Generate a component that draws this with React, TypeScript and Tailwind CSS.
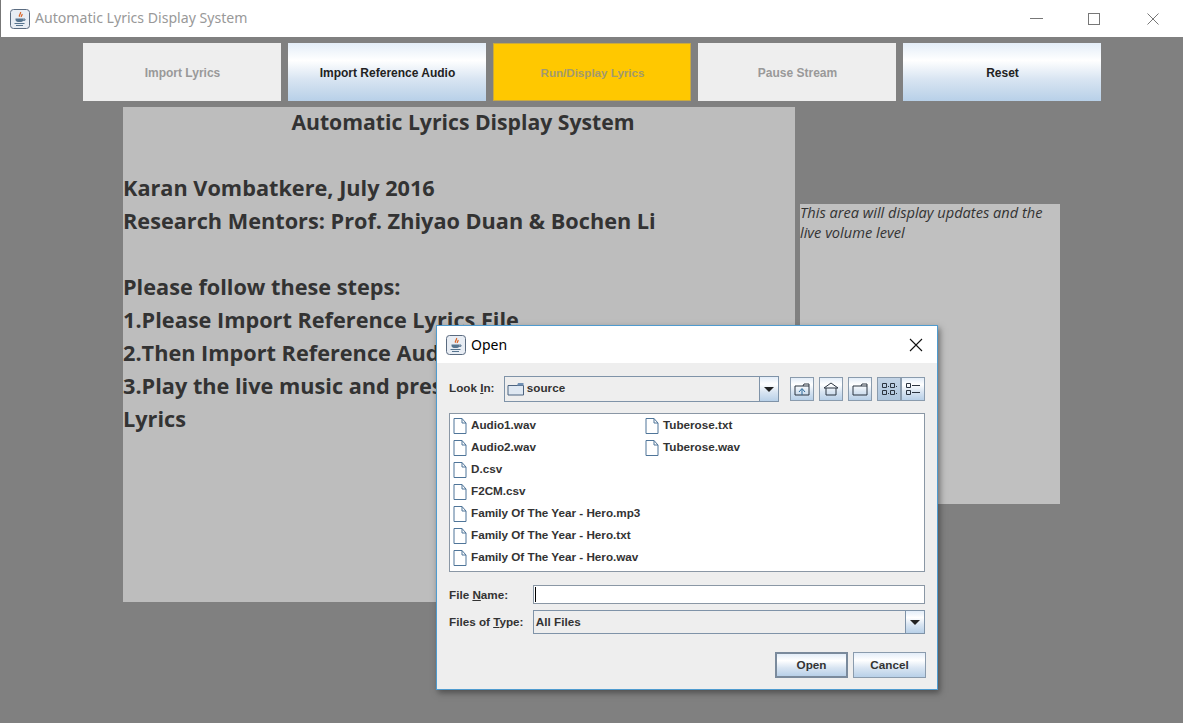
import type { ReactNode } from "react";

const TOP_BUTTONS = [
  { label: "Import Lyrics", kind: "off" },
  { label: "Import Reference Audio", kind: "on" },
  { label: "Run/Display Lyrics", kind: "run" },
  { label: "Pause Stream", kind: "off" },
  { label: "Reset", kind: "on" },
];

const METAL = "bg-[linear-gradient(180deg,#e3edf8_0%,#ffffff_30%,#d9e5f2_62%,#b8d0e8_100%)]";

const COL_ONE = [
  "Audio1.wav",
  "Audio2.wav",
  "D.csv",
  "F2CM.csv",
  "Family Of The Year - Hero.mp3",
  "Family Of The Year - Hero.txt",
  "Family Of The Year - Hero.wav",
];
const COL_TWO = ["Tuberose.txt", "Tuberose.wav"];

function JavaIcon() {
  return (
    <svg width="20" height="20" viewBox="0 0 20 20" className="shrink-0">
      <rect x="0.5" y="0.5" width="19" height="19" rx="3" fill="#e8edf4" stroke="#5a6b80" />
      <path d="M10.5 3c1 1.600-2 2.600-1 4.800M12 5c.6 1-1.200 1.600-.6 3" fill="none" stroke="#d9662a" strokeWidth="1.300" />
      <path d="M5.500 9.500h8v1.200c0 1.400-1.500 2.300-4 2.300s-4-.9-4-2.300z" fill="#56748f" />
      <path d="M13.500 10h1.500v1.300h-2" fill="none" stroke="#56748f" />
      <path d="M4.500 14.500h10M6 16.500h7" stroke="#56748f" strokeWidth="1.100" />
    </svg>
  );
}

function FileIcon() {
  return (
    <svg width="14" height="16" viewBox="0 0 14 16" className="shrink-0">
      <path d="M1 .5h8l4 4.500v10.500H1z" fill="#ffffff" stroke="#4f7599" />
      <path d="M9 .5v4.500h4" fill="none" stroke="#4f7599" />
    </svg>
  );
}

function FileRow({ name }: { name: string }) {
  return (
    <div className="flex h-[22px] items-center gap-[4px]">
      <FileIcon />
      <span className="whitespace-nowrap pb-[2px]">{name}</span>
    </div>
  );
}

function ToolButton({ active, children }: { active?: boolean; children: ReactNode }) {
  return (
    <div
      className={`flex h-[24px] w-[24px] items-center justify-center border border-[#8a9bad] ${
        active ? "bg-[linear-gradient(180deg,#c3d4e6,#aec6de)]" : METAL
      }`}
    >
      <svg width="18" height="18" viewBox="0 0 18 18" fill="none" stroke="#2b3440">
        {children}
      </svg>
    </div>
  );
}

function ArrowButton({ className }: { className: string }) {
  return (
    <div className={`flex items-center justify-center border-l border-[#7f93a8] ${METAL} ${className}`}>
      <div className="h-0 w-0 border-x-[5px] border-t-[5px] border-x-transparent border-t-[#222222]" />
    </div>
  );
}

function OpenDialog() {
  return (
    <div className="absolute left-[436px] top-[325px] flex h-[365px] w-[502px] flex-col border border-[#4f9bcf] bg-[#eeeeee] font-['Liberation_Sans',sans-serif] text-[11.7px] font-bold text-[#333333] shadow-[2px_3px_6px_rgba(40,40,40,0.55)]">
      <div className="flex h-[37px] shrink-0 items-center bg-white pl-[9px] pr-[14px]">
        <JavaIcon />
        <span className="ml-[5px] font-['Noto_Sans',sans-serif] text-[14px] font-normal text-black">Open</span>
        <svg width="14" height="14" viewBox="0 0 14 14" className="ml-auto" stroke="#111111" strokeWidth="1.100">
          <path d="M1 1l12 12M13 1L1 13" />
        </svg>
      </div>

      <div className="flex flex-col px-[12px] pt-[13px]">
        <div className="flex items-center">
          <span className="w-[55px] pb-[2px]">
            Look <span className="underline">I</span>n:
          </span>
          <div className="flex h-[26px] w-[276px] border border-[#7f93a8] bg-[#eeeeee]">
            <div className="flex flex-1 items-center gap-[2px] pl-[2px]">
              <svg width="18" height="14" viewBox="0 0 18 14">
                <path d="M1 3.500h15.500V13H1z" fill="#dfe8f2" stroke="#4d6480" />
                <path d="M10 3.500l1-2.500h5.500v2.500z" fill="#6f8fb3" />
              </svg>
              <span className="pb-[2px]">source</span>
            </div>
            <ArrowButton className="w-[19px]" />
          </div>
          <div className="ml-[11px] flex">
            <ToolButton>
              <path d="M2 6h14v9H2zM10 6l1-2h5v2" />
              <path d="M6 12l3-3.500 3 3.500M9 9v6" stroke="#2f6b9a" />
            </ToolButton>
            <div className="w-[5px]" />
            <ToolButton>
              <path d="M2 8l7-5 7 5zM4 8v7h10V8" />
            </ToolButton>
            <div className="w-[5px]" />
            <ToolButton>
              <path d="M2 6h14v9H2zM10 6l1-2h5v2" />
            </ToolButton>
            <div className="w-[5px]" />
            <ToolButton active>
              <path d="M2.500 3.500h4v4h-4zM10.500 3.500h4v4h-4zM2.500 10.500h4v4h-4zM10.500 10.500h4v4h-4z" />
              <path d="M8 6.500h1M16 6.500h1M8 13.500h1M16 13.500h1" />
            </ToolButton>
            <ToolButton>
              <path d="M2.500 3.500h4v4h-4zM2.500 10.500h4v4h-4zM8 5.500h8M8 12.500h8" />
            </ToolButton>
          </div>
        </div>

        <div className="mt-[11px] flex h-[159px] w-[476px] border border-[#8a97a5] bg-white pl-[3px] pt-[1px]">
          <div className="w-[192px]">
            {COL_ONE.map((name) => (
              <FileRow key={name} name={name} />
            ))}
          </div>
          <div>
            {COL_TWO.map((name) => (
              <FileRow key={name} name={name} />
            ))}
          </div>
        </div>

        <div className="mt-[13px] flex items-center">
          <span className="w-[84px]">
            File <span className="underline">N</span>ame:
          </span>
          <div className="flex h-[19px] w-[392px] items-center border border-[#8a97a5] bg-white pl-[1px]">
            <div className="h-[15px] w-px bg-black" />
          </div>
        </div>

        <div className="mt-[6px] flex items-center">
          <span className="w-[84px]">
            Files of <span className="underline">T</span>ype:
          </span>
          <div className="flex h-[24px] w-[393px] border border-[#7f93a8] bg-[#eeeeee]">
            <div className="flex flex-1 items-center pl-[2px]">All Files</div>
            <ArrowButton className="w-[19px]" />
          </div>
        </div>

        <div className="-mr-px mt-[18px] flex justify-end gap-[5px]">
          <div className={`flex h-[26px] w-[73px] items-center justify-center border-2 border-[#7a8a9c] ${METAL}`}>Open</div>
          <div className={`flex h-[26px] w-[73px] items-center justify-center border border-[#8a9bad] ${METAL}`}>Cancel</div>
        </div>
      </div>
    </div>
  );
}

export default function App() {
  return (
    <div className="relative flex h-[723px] w-[1183px] flex-col overflow-hidden bg-[#808080]">
      <div className="flex h-[37px] shrink-0 items-center border-l border-[#777777] bg-white pl-[9px]">
        <JavaIcon />
        <span className="mb-px ml-[5px] font-['Noto_Sans',sans-serif] text-[14.1px] text-[#999999]">
          Automatic Lyrics Display System
        </span>
        <div className="ml-auto flex items-center">
          <div className="h-px w-[13px] bg-[#777777]" />
          <div className="ml-[45px] h-[12px] w-[12px] border border-[#777777]" />
          <svg width="12" height="12" viewBox="0 0 12 12" className="ml-[47px] mr-[24px]" stroke="#777777">
            <path d="M.5.500l11 11M11.500.500l-11 11" />
          </svg>
        </div>
      </div>

      <div className="mt-[6px] flex justify-center gap-[7px] font-['Liberation_Sans',sans-serif] text-[12px] font-bold">
        {TOP_BUTTONS.map((b) => (
          <div
            key={b.label}
            className={`flex h-[58px] w-[198px] items-center justify-center pl-[2px] pt-[2px] ${
              b.kind === "off"
                ? "bg-[#eeeeee] text-[#999999]"
                : b.kind === "run"
                  ? "border border-[#c9a93f] bg-[#ffc800] text-[11.6px] text-[#a39a6e]"
                  : `${METAL} text-[#222222]`
            }`}
          >
            {b.label}
          </div>
        ))}
      </div>

      <div className="mt-[6px] flex items-start justify-center gap-[5px]">
        <div className="flex h-[495px] w-[672px] flex-col bg-[#bdbdbd] font-['Open_Sans',sans-serif] text-[21.7px] font-bold leading-[33px] text-[#333333]">
          <div className="-mt-[2px] pl-[8px] text-center text-[21.2px]">Automatic Lyrics Display System</div>
          <br />
          <div>Karan Vombatkere, July 2016</div>
          <div>Research Mentors: Prof. Zhiyao Duan &amp; Bochen Li</div>
          <br />
          <div>Please follow these steps:</div>
          <div>1.Please Import Reference Lyrics File</div>
          <div>2.Then Import Reference Audio File</div>
          <div>
            3.Play the live music and press Run/Display
            <br />
            Lyrics
          </div>
        </div>
        <div className="mt-[97px] flex h-[300px] w-[260px] flex-col bg-[#c0c0c0] font-['Open_Sans',sans-serif] text-[14.6px] italic leading-[20px] text-[#333333]">
          <p className="-mt-[2px]">This area will display updates and the live volume level</p>
        </div>
      </div>

      <OpenDialog />
    </div>
  );
}
